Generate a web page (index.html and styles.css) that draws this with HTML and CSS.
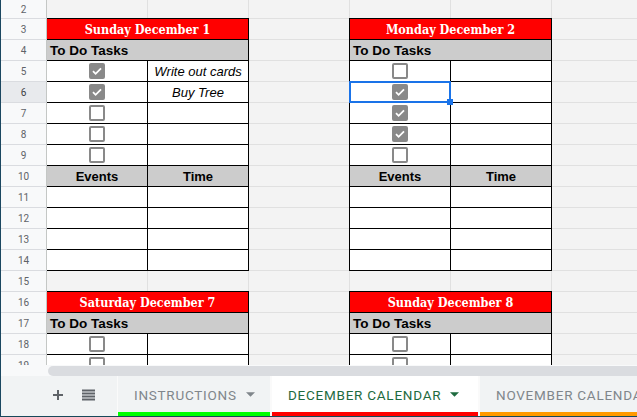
FILE: index.html
```html
<!DOCTYPE html>
<html lang="en">
<head>
  <meta charset="UTF-8">
  <title>December Calendar</title>
  <link rel="stylesheet" href="styles.css">
</head>
<body>
<div class="app">
  <div class="sheet">
    <!-- row numbers -->
    <div class="rownum">2</div>
    <div class="rownum">3</div>
    <div class="rownum">4</div>
    <div class="rownum">5</div>
    <div class="rownum active">6</div>
    <div class="rownum">7</div>
    <div class="rownum">8</div>
    <div class="rownum">9</div>
    <div class="rownum">10</div>
    <div class="rownum">11</div>
    <div class="rownum">12</div>
    <div class="rownum">13</div>
    <div class="rownum">14</div>
    <div class="rownum">15</div>
    <div class="rownum">16</div>
    <div class="rownum">17</div>
    <div class="rownum">18</div>
    <div class="rownum">19</div>

    <!-- Sunday December 1 -->
    <div class="day day-left day-top">
      <div class="day-title">Sunday December 1</div>
      <div class="day-label wide">To Do Tasks</div>
      <div class="cell"><span class="cb checked"><svg viewBox="0 0 12 12"><path d="M2 6.2l2.6 2.6L10 3.4"/></svg></span></div>
      <div class="cell task">Write out cards</div>
      <div class="cell"><span class="cb checked"><svg viewBox="0 0 12 12"><path d="M2 6.2l2.6 2.6L10 3.4"/></svg></span></div>
      <div class="cell task">Buy Tree</div>
      <div class="cell"><span class="cb"></span></div>
      <div class="cell"></div>
      <div class="cell"><span class="cb"></span></div>
      <div class="cell"></div>
      <div class="cell"><span class="cb"></span></div>
      <div class="cell"></div>
      <div class="day-label center">Events</div>
      <div class="day-label center">Time</div>
      <div class="cell"></div><div class="cell"></div>
      <div class="cell"></div><div class="cell"></div>
      <div class="cell"></div><div class="cell"></div>
      <div class="cell"></div><div class="cell"></div>
    </div>

    <!-- Monday December 2 -->
    <div class="day day-right day-top">
      <div class="day-title">Monday December 2</div>
      <div class="day-label wide">To Do Tasks</div>
      <div class="cell"><span class="cb"></span></div>
      <div class="cell"></div>
      <div class="cell sel"><span class="cb checked"><svg viewBox="0 0 12 12"><path d="M2 6.2l2.6 2.6L10 3.4"/></svg></span><span class="handle"></span></div>
      <div class="cell"></div>
      <div class="cell"><span class="cb checked"><svg viewBox="0 0 12 12"><path d="M2 6.2l2.6 2.6L10 3.4"/></svg></span></div>
      <div class="cell"></div>
      <div class="cell"><span class="cb checked"><svg viewBox="0 0 12 12"><path d="M2 6.2l2.6 2.6L10 3.4"/></svg></span></div>
      <div class="cell"></div>
      <div class="cell"><span class="cb"></span></div>
      <div class="cell"></div>
      <div class="day-label center">Events</div>
      <div class="day-label center">Time</div>
      <div class="cell"></div><div class="cell"></div>
      <div class="cell"></div><div class="cell"></div>
      <div class="cell"></div><div class="cell"></div>
      <div class="cell"></div><div class="cell"></div>
    </div>

    <!-- Saturday December 7 -->
    <div class="day day-left day-bottom">
      <div class="day-title">Saturday December 7</div>
      <div class="day-label wide">To Do Tasks</div>
      <div class="cell"><span class="cb"></span></div>
      <div class="cell"></div>
      <div class="cell"><span class="cb"></span></div>
      <div class="cell"></div>
    </div>

    <!-- Sunday December 8 -->
    <div class="day day-right day-bottom">
      <div class="day-title">Sunday December 8</div>
      <div class="day-label wide">To Do Tasks</div>
      <div class="cell"><span class="cb"></span></div>
      <div class="cell"></div>
      <div class="cell"><span class="cb"></span></div>
      <div class="cell"></div>
    </div>
  </div>

  <div class="hscroll"><div class="thumb"></div></div>

  <div class="tabbar">
    <div class="tools">
      <svg class="tool" width="12" height="12" viewBox="0 0 12 12"><path d="M6 1v10M1 6h10"/></svg>
      <svg class="tool" width="13" height="12" viewBox="0 0 13 12"><path d="M0 1.5h13M0 4.5h13M0 7.5h13M0 10.5h13"/></svg>
    </div>
    <div class="tab tab-green">INSTRUCTIONS <svg class="caret" viewBox="0 0 10 5"><path d="M0 0h10L5 5z"/></svg></div>
    <div class="tab tab-red current">DECEMBER CALENDAR <svg class="caret" viewBox="0 0 10 5"><path d="M0 0h10L5 5z"/></svg></div>
    <div class="tab tab-orange">NOVEMBER CALENDAR <svg class="caret" viewBox="0 0 10 5"><path d="M0 0h10L5 5z"/></svg></div>
  </div>
</div>
</body>
</html>
```

FILE: styles.css
```css
body {
  margin: 0;
  width: 637px;
  height: 417px;
  overflow: hidden;
  font-family: 'Liberation Sans', Arial, sans-serif;
  background: #f1f3f4;
}
.app {
  border-left: 1px solid #1b4760;
  border-bottom: 1px solid #17485a;
  height: 416px;
  display: flex;
  flex-direction: column;
  overflow: hidden;
}
.sheet {
  height: 365px;
  flex-shrink: 0;
  overflow: hidden;
  display: grid;
  grid-template-columns: 46px repeat(6, 101px);
  grid-template-rows: 19px;
  grid-auto-rows: 21px;
  background-color: #f3f3f3;
  background-image:
    linear-gradient(to right, transparent 100px, #e0e0e0 100px),
    linear-gradient(to bottom, transparent 20px, #e0e0e0 20px);
  background-size: 101px 100%, 100% 21px;
  background-position: 46px 0, 0 -2px;
}
.rownum {
  grid-column: 1;
  position: relative;
  z-index: 1;
  box-sizing: border-box;
  background: #f8f9fa;
  border-right: 1px solid #c4c7c5;
  border-bottom: 1px solid #dadce0;
  color: #5f6368;
  font-family: Roboto, sans-serif;
  font-size: 10px;
  display: flex;
  align-items: center;
  justify-content: center;
}
.rownum.active {
  background: #e8eaed;
  color: #3c4043;
}

.day {
  display: grid;
  grid-template-columns: 100px 100px;
  grid-auto-rows: 20px;
  gap: 1px;
  padding: 1px;
  background: #000;
  margin: -1px 0 0 -1px;
}
.day-left { grid-column: 2 / span 2; }
.day-right { grid-column: 5 / span 2; }
.day-top { grid-row: 2 / span 12; }
.day-bottom { grid-row: 15 / span 4; }

.day-title {
  grid-column: span 2;
  background: #ff0000;
  color: #fff;
  font-family: 'DejaVu Serif Condensed', 'DejaVu Serif', serif;
  font-weight: bold;
  font-size: 12.5px;
  display: flex;
  align-items: center;
  justify-content: center;
}
.day-label {
  background: #cccccc;
  color: #000;
  font-weight: bold;
  font-size: 13px;
  display: flex;
  align-items: center;
  padding-left: 3px;
}
.day-label.wide {
  grid-column: span 2;
  font-size: 13.5px;
}
.day-label.center {
  justify-content: center;
  padding-left: 0;
}
.cell {
  background: #fff;
  display: flex;
  align-items: center;
  justify-content: center;
}
.task {
  font-style: italic;
  font-size: 13px;
  color: #000;
}

.cb {
  box-sizing: border-box;
  width: 16px;
  height: 16px;
  border: 2px solid #898989;
  border-radius: 2px;
  display: flex;
  align-items: center;
  justify-content: center;
}
.cb.checked {
  background: #898989;
}
.cb svg {
  width: 12px;
  height: 12px;
  fill: none;
  stroke: #fff;
  stroke-width: 1.8;
}

.sel { position: relative; }
.sel::after {
  content: '';
  position: absolute;
  inset: -1px;
  border: 2px solid #1a73e8;
}
.handle {
  position: absolute;
  right: -3px;
  bottom: -3px;
  width: 6px;
  height: 6px;
  background: #1a73e8;
  z-index: 1;
}

.hscroll {
  height: 11px;
  flex-shrink: 0;
  background: #f8f9fa;
  display: flex;
  align-items: center;
}
.thumb {
  margin-left: 47px;
  flex: 1;
  height: 10px;
  background: #dadce0;
  border-radius: 5px 0 0 5px;
}

.tabbar {
  flex: 1;
  display: flex;
  background: #f1f3f4;
  font-family: Roboto, sans-serif;
  overflow: hidden;
}
.tools {
  width: 116px;
  flex-shrink: 0;
  display: flex;
  align-items: center;
  gap: 18px;
  padding-left: 51px;
  padding-bottom: 2px;
  box-sizing: border-box;
}
.tool {
  fill: none;
  stroke: #5f6368;
  stroke-width: 2;
}
.tab {
  flex-shrink: 0;
  box-sizing: border-box;
  display: flex;
  align-items: center;
  gap: 9px;
  padding: 0 15px 3px 16px;
  font-size: 13.5px;
  letter-spacing: 0.75px;
  color: #80868b;
  white-space: nowrap;
  border-left: 1px solid #fafafa;
  border-right: 1px solid #fafafa;
}
.tab-green {
  width: 154px;
  box-shadow: inset 0 -4px 0 #00ff00;
}
.tab-red {
  width: 208px;
  box-shadow: inset 0 -4px 0 #ff0000;
}
.tab-orange {
  box-shadow: inset 0 -4px 0 #ff9900;
}
.tab.current {
  background: #fff;
  color: #1e6b3f;
}
.caret {
  width: 9px;
  height: 5px;
  fill: currentColor;
}
```
